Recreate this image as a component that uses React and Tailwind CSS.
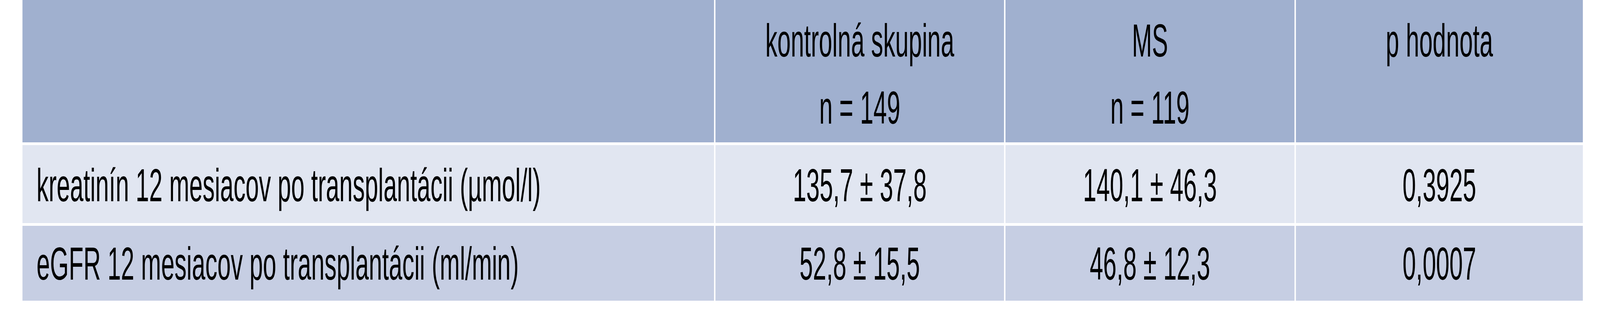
import React from 'react';

// The browser window is capped at 4096px wide, the table is drawn at the
// reference's 7834px width and squeezed horizontally to fit.
const rows = [
  {
    label: 'kreatinín 12 mesiacov po transplantácii (µmol/l)',
    control: '135,7 ± 37,8',
    ms: '140,1 ± 46,3',
    p: '0,3925',
    bg: 'bg-[#e1e6f1]',
    h: 'h-[200px] pt-[17px]',
  },
  {
    label: 'eGFR 12 mesiacov po transplantácii (ml/min)',
    control: '52,8 ± 15,5',
    ms: '46,8 ± 12,3',
    p: '0,0007',
    bg: 'bg-[#c6cee3]',
    h: 'h-[192px] pt-[11px]',
  },
];

const App = () => {
  return (
    <div className="w-full h-[800px] overflow-hidden bg-white">
      <div className="w-[7834px] h-[800px] origin-top-left scale-x-[0.52285] pl-[110px] font-['Liberation_Sans',Arial,sans-serif] text-[118px] leading-[172px] text-black">
        <div className="w-[7640px] grid grid-cols-[3386px_1413px_1415px_1405px] gap-[7px]">
          {/* header */}
          <div className="h-[365px] bg-[#a0b0cf]" />
          <div className="h-[365px] bg-[#a0b0cf] pt-[18px] text-center">
            <div>kontrolná skupina</div>
            <div>n = 149</div>
          </div>
          <div className="h-[365px] bg-[#a0b0cf] pt-[18px] text-center">
            <div>MS</div>
            <div>n = 119</div>
          </div>
          <div className="h-[365px] bg-[#a0b0cf] pt-[18px] text-center">
            <div>p hodnota</div>
          </div>

          {rows.map((row) => (
            <React.Fragment key={row.label}>
              <div className={`${row.bg} ${row.h} pl-[69px] whitespace-nowrap`}>{row.label}</div>
              <div className={`${row.bg} ${row.h} text-center whitespace-nowrap`}>{row.control}</div>
              <div className={`${row.bg} ${row.h} text-center whitespace-nowrap`}>{row.ms}</div>
              <div className={`${row.bg} ${row.h} text-center whitespace-nowrap`}>{row.p}</div>
            </React.Fragment>
          ))}
        </div>
      </div>
    </div>
  );
};

export default App;
